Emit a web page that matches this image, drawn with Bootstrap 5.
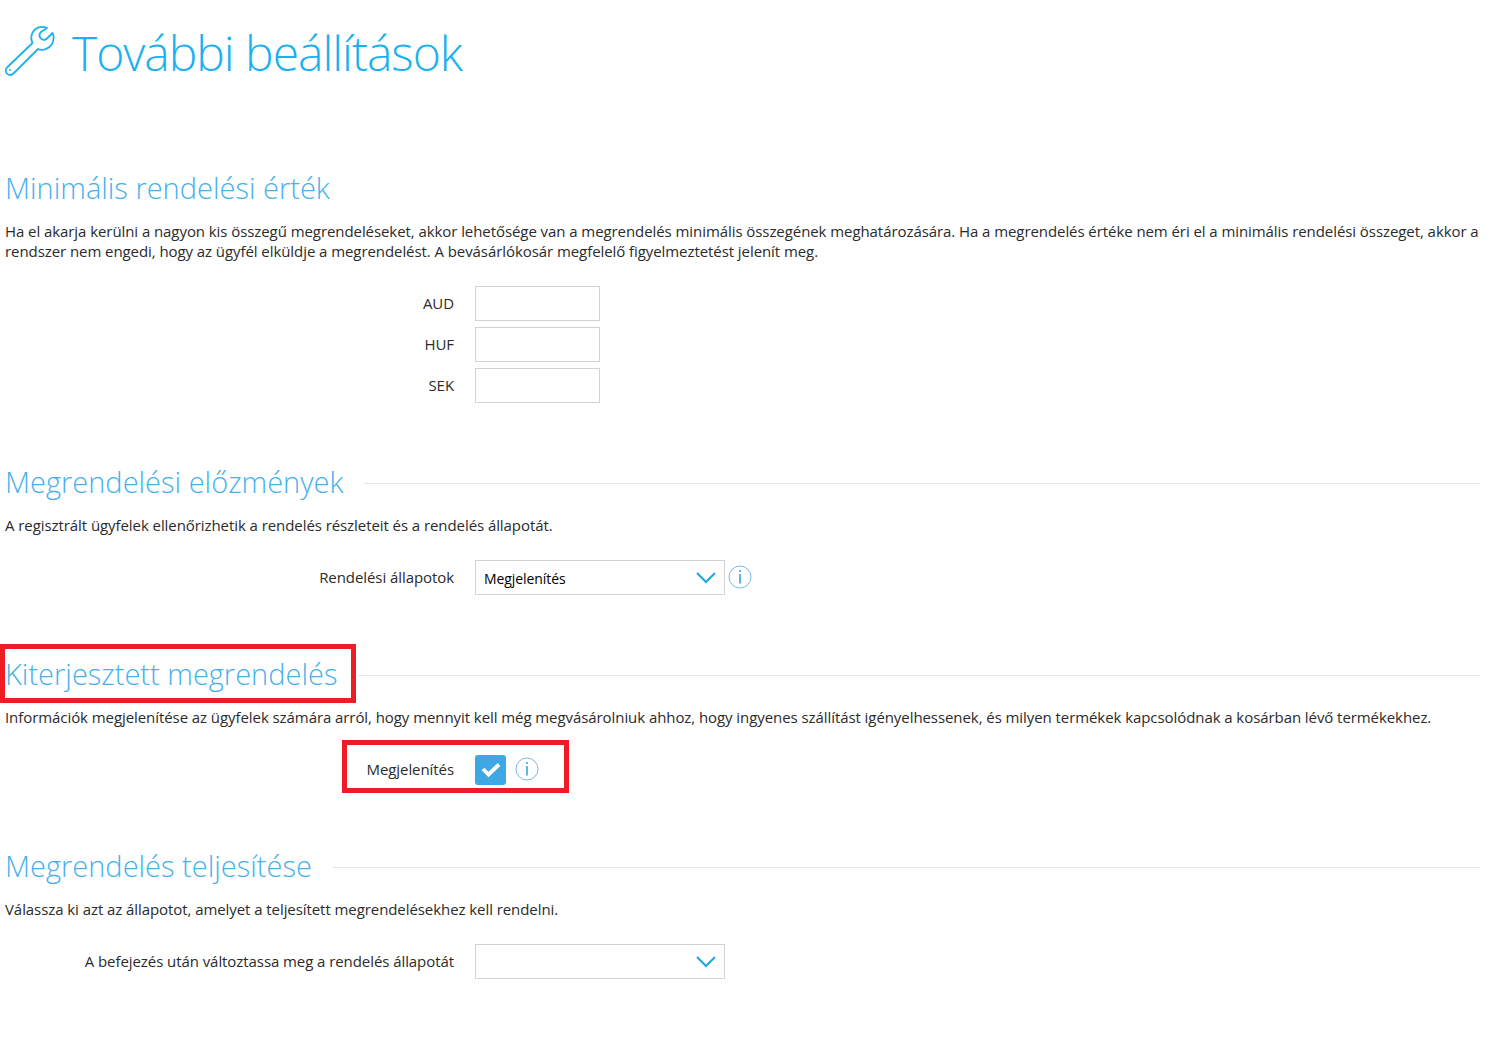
<!DOCTYPE html>
<html lang="hu">
<head>
    <meta charset="UTF-8">
    <meta name="viewport" content="width=device-width, initial-scale=1.0">
    <title>További beállítások</title>
    <link href="https://cdn.jsdelivr.net/npm/bootstrap@5.3.0/dist/css/bootstrap.min.css" rel="stylesheet">
    <style>
        body {
            font-family: "Open Sans", sans-serif;
            font-size: 15px;
            line-height: 20px;
            letter-spacing: -0.072px;
            color: #2b2b2b;
        }
        .page {
            padding: 23px 26px 0 5px;
        }
        .page-title {
            font-size: 48px;
            font-weight: 300;
            line-height: 60px;
            letter-spacing: -1.02px;
            color: #1cb1ee;
            margin-left: 17px;
        }
        .page-header {
            margin-bottom: 85px;
        }
        .wrench {
            margin-bottom: 6px;
        }
        .settings {
            margin-bottom: 59px;
        }
        .settings-title {
            font-size: 29px;
            font-weight: 300;
            line-height: 40px;
            letter-spacing: 0;
            color: #47b1ec;
            white-space: nowrap;
        }
        .settings-line {
            height: 1px;
            margin: 2px 0 0 21px;
            background: #e6e6e6;
        }
        .settings-text {
            margin: 13px 0 25px;
        }
        .field {
            min-height: 35px;
        }
        .field-label {
            width: 449px;
            margin-right: 21px;
            padding-bottom: 2px;
            text-align: right;
        }
        .price, .state {
            height: 35px;
            border-color: #d3d3d3;
            border-radius: 0;
        }
        .price {
            width: 125px;
        }
        .state {
            width: 250px;
            padding: 0 8px;
            border: 1px solid #d3d3d3;
            color: #000;
            font-size: 14px;
        }
        .state-value {
            padding-top: 2px;
        }
        .tick {
            width: 31px;
            height: 30px;
            border-radius: 3px;
            background: #3ea8e5;
        }
        .info {
            margin: 0 0 1px 3px;
        }
        .tick + .info {
            margin-left: 8.5px;
        }
        /* red frames that point out the important parts */
        .frame {
            position: absolute;
            border: 5px solid #ee1c25;
            pointer-events: none;
        }
        .frame-title {
            left: -5px;
            top: -10px;
            width: 356px;
            height: 59px;
        }
        .frame-field {
            left: 337px;
            top: -12px;
            width: 227px;
            height: 53px;
        }
    </style>
</head>
<body>
    <main class="page">
        <header class="page-header d-flex align-items-center">
            <!-- Wrench -->
            <svg class="wrench" width="50" height="52" viewBox="0 0 50 52" fill="none" stroke="#1cb1ee" stroke-width="1.800" stroke-linejoin="round">
                <path d="M42 4C36 1 29 4 27 10C25.600 14 26.500 17 27.500 19L2 43.500C-1 47 2 51 5 51C7 51 8 50 9 49L33 25C38 27 44 25 47 20C49 16 49 12 47.500 9L42 14.500C40 16.500 37 16 35.500 14C34 12 34 10 36 8Z"/>
                <circle cx="5" cy="46" r="1" fill="#1cb1ee" stroke="none"/>
            </svg>
            <h1 class="page-title mb-0">További beállítások</h1>
        </header>

        <section class="settings">
            <h2 class="settings-title mb-0">Minimális rendelési érték</h2>
            <p class="settings-text">Ha el akarja kerülni a nagyon kis összegű megrendeléseket, akkor lehetősége van a megrendelés minimális összegének meghatározására. Ha a megrendelés értéke nem éri el a minimális rendelési összeget, akkor a rendszer nem engedi, hogy az ügyfél elküldje a megrendelést. A bevásárlókosár megfelelő figyelmeztetést jelenít meg.</p>
            <div class="d-flex flex-column" style="gap: 6px">
                <div class="field d-flex align-items-center">
                    <label class="field-label" for="aud">AUD</label>
                    <input type="text" class="form-control price" id="aud">
                </div>
                <div class="field d-flex align-items-center">
                    <label class="field-label" for="huf">HUF</label>
                    <input type="text" class="form-control price" id="huf">
                </div>
                <div class="field d-flex align-items-center">
                    <label class="field-label" for="sek">SEK</label>
                    <input type="text" class="form-control price" id="sek">
                </div>
            </div>
        </section>

        <section class="settings">
            <div class="d-flex align-items-center">
                <h2 class="settings-title mb-0">Megrendelési előzmények</h2>
                <div class="settings-line flex-grow-1"></div>
            </div>
            <p class="settings-text">A regisztrált ügyfelek ellenőrizhetik a rendelés részleteit és a rendelés állapotát.</p>
            <div class="field d-flex align-items-center">
                <span class="field-label">Rendelési állapotok</span>
                <div class="state d-flex align-items-center justify-content-between" role="button">
                    <span class="state-value">Megjelenítés</span>
                    <svg width="20" height="14" viewBox="0 0 20 14" fill="none" stroke="#1ba8df" stroke-width="2"><path d="M1 2L10 11L19 2"/></svg>
                </div>
                <svg class="info" width="24" height="24" viewBox="0 0 24 24" fill="none">
                    <circle cx="12" cy="12" r="11" stroke="#74b9f0"/>
                    <path d="M12 5V7M12 9V18.500" stroke="#2fa9e8" stroke-width="1.600"/>
                </svg>
            </div>
        </section>

        <section class="settings">
            <div class="position-relative d-flex align-items-center">
                <h2 class="settings-title mb-0">Kiterjesztett megrendelés</h2>
                <div class="settings-line flex-grow-1"></div>
                <div class="frame frame-title"></div>
            </div>
            <p class="settings-text">Információk megjelenítése az ügyfelek számára arról, hogy mennyit kell még megvásárolniuk ahhoz, hogy ingyenes szállítást igényelhessenek, és milyen termékek kapcsolódnak a kosárban lévő termékekhez.</p>
            <div class="field position-relative d-flex align-items-center">
                <span class="field-label">Megjelenítés</span>
                <span class="tick d-flex align-items-center justify-content-center" role="checkbox" aria-checked="true">
                    <svg width="20" height="16" viewBox="0 0 20 16" fill="none" stroke="#fff" stroke-width="3.800"><path d="M2 7L7.500 12.500L18 2.500"/></svg>
                </span>
                <svg class="info" width="24" height="24" viewBox="0 0 24 24" fill="none">
                    <circle cx="12" cy="12" r="11" stroke="#74b9f0"/>
                    <path d="M12 5V7M12 9V18.500" stroke="#2fa9e8" stroke-width="1.600"/>
                </svg>
                <div class="frame frame-field"></div>
            </div>
        </section>

        <section>
            <div class="d-flex align-items-center">
                <h2 class="settings-title mb-0">Megrendelés teljesítése</h2>
                <div class="settings-line flex-grow-1"></div>
            </div>
            <p class="settings-text">Válassza ki azt az állapotot, amelyet a teljesített megrendelésekhez kell rendelni.</p>
            <div class="field d-flex align-items-center">
                <span class="field-label">A befejezés után változtassa meg a rendelés állapotát</span>
                <div class="state d-flex align-items-center justify-content-end" role="button">
                    <svg width="20" height="14" viewBox="0 0 20 14" fill="none" stroke="#1ba8df" stroke-width="2"><path d="M1 2L10 11L19 2"/></svg>
                </div>
            </div>
        </section>
    </main>

    <script src="https://cdn.jsdelivr.net/npm/bootstrap@5.3.0/dist/js/bootstrap.bundle.min.js"></script>
</body>
</html>
